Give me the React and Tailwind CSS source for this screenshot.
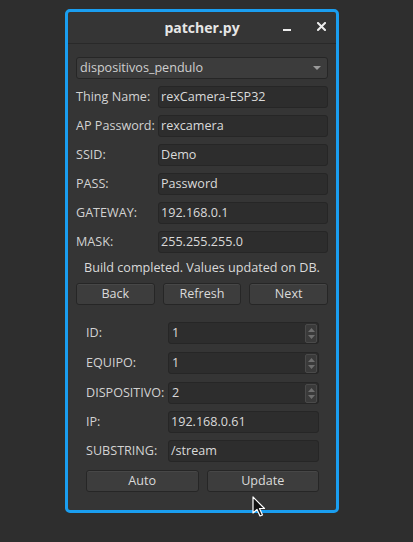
import React from "react";

const font = { fontFamily: '"Open Sans", "Noto Sans", sans-serif' };

function Field({ label, value }) {
  return (
    <div className="flex items-center h-[22px]">
      <div className="w-[82px] shrink-0 text-[12.6px] text-[#d2d2d2] leading-none whitespace-nowrap">{label}</div>
      <div className="flex-1 h-[22px] flex items-center rounded-[3px] border border-[#262626] bg-[#2d2d2d] pl-[2px] text-[12.6px] text-[#dadada] leading-none">
        {value}
      </div>
    </div>
  );
}

function Spin({ label, value }) {
  return (
    <div className="flex items-center h-[22px]">
      <div className="w-[82px] shrink-0 text-[12.6px] text-[#d2d2d2] leading-none whitespace-nowrap">{label}</div>
      <div className="flex-1 h-[22px] flex items-center rounded-[3px] border border-[#262626] bg-[#2d2d2d] pl-[3px] pr-[1px] text-[12.6px] text-[#dadada] leading-none">
        <span className="flex-1">{value}</span>
        <div className="w-[12px] h-[19px] rounded-[2px] border border-[#4a4a4a] bg-[#3a3a3a] flex flex-col items-center justify-center gap-[3px]">
          <svg width="7" height="4" viewBox="0 0 7 4"><path d="M0 4 L3.5 0 L7 4 Z" fill="#6e6e6e" /></svg>
          <svg width="7" height="4" viewBox="0 0 7 4"><path d="M0 0 L3.5 4 L7 0 Z" fill="#6e6e6e" /></svg>
        </div>
      </div>
    </div>
  );
}

function Btn({ children }) {
  return (
    <div className="flex-1 h-[22px] flex items-center justify-center rounded-[3px] border border-[#262626] bg-[#3d3d3d] text-[12.6px] text-[#dadada] leading-none shadow-[inset_0_1px_0_#474747]">
      {children}
    </div>
  );
}

export default function App() {
  return (
    <div className="relative w-[413px] h-[542px] bg-[#2e2e2e] overflow-hidden" style={font}>
      <div className="ml-[65px] pt-[9px]">
        <div className="w-[274px] h-[504px] rounded-[5px] border-[3px] border-[#1a9ef0] bg-[#353535] flex flex-col">
          <div className="relative h-[32px] shrink-0 border-b border-[#292929] flex items-center justify-center">
            <span className="text-[14px] font-bold text-[#e6e6e6] leading-none">patcher.py</span>
            <div className="absolute left-[215px] top-[17px] w-[8px] h-[2px] bg-[#ededed]" />
            <svg className="absolute left-[249px] top-[10px]" width="9" height="9" viewBox="0 0 9 9">
              <path d="M1 1 L8 8 M8 1 L1 8" stroke="#ededed" strokeWidth="2" strokeLinecap="square" />
            </svg>
          </div>
          <div className="pl-[8px] pr-[8px] pt-[13px] flex flex-col gap-[7px]">
            <div className="h-[22px] flex items-center rounded-[3px] border border-[#262626] bg-[#3c3c3c] pl-[3px] pr-[6px] text-[12.6px] text-[#cfcfcf] leading-none">
              <span className="flex-1">dispositivos_pendulo</span>
              <svg width="8" height="4" viewBox="0 0 8 4"><path d="M0 0 L4 4 L8 0 Z" fill="#9a9a9a" /></svg>
            </div>
            <Field label="Thing Name:" value="rexCamera-ESP32" />
            <Field label="AP Password:" value="rexcamera" />
            <Field label="SSID:" value="Demo" />
            <Field label="PASS:" value="Password" />
            <Field label="GATEWAY:" value="192.168.0.1" />
            <Field label="MASK:" value="255.255.255.0" />
            <div className="h-[16px] flex items-center justify-center text-[12.6px] text-[#dadada] leading-none">
              Build completed. Values updated on DB.
            </div>
            <div className="flex gap-[8px]">
              <Btn>Back</Btn>
              <Btn>Refresh</Btn>
              <Btn>Next</Btn>
            </div>
          </div>
          <div className="pl-[18px] pr-[17px] pt-[17px] flex flex-col">
            <Spin label="ID:" value="1" />
            <div className="mt-[8px]"><Spin label="EQUIPO:" value="1" /></div>
            <div className="mt-[8px]"><Spin label="DISPOSITIVO:" value="2" /></div>
            <div className="mt-[7px]"><Field label="IP:" value="192.168.0.61" /></div>
            <div className="mt-[7px]"><Field label="SUBSTRING:" value="/stream" /></div>
            <div className="flex gap-[8px] mt-[8px]">
              <Btn>Auto</Btn>
              <Btn>Update</Btn>
            </div>
          </div>
        </div>
      </div>
      <svg className="absolute left-[252px] top-[496px]" width="14" height="22" viewBox="0 0 14 22">
        <path d="M1 1 L1 17 L5 13.5 L8 20 L10.5 19 L7.5 12.5 L12.5 12.5 Z" fill="#111" stroke="#fff" strokeWidth="1.2" strokeLinejoin="round" />
      </svg>
    </div>
  );
}
